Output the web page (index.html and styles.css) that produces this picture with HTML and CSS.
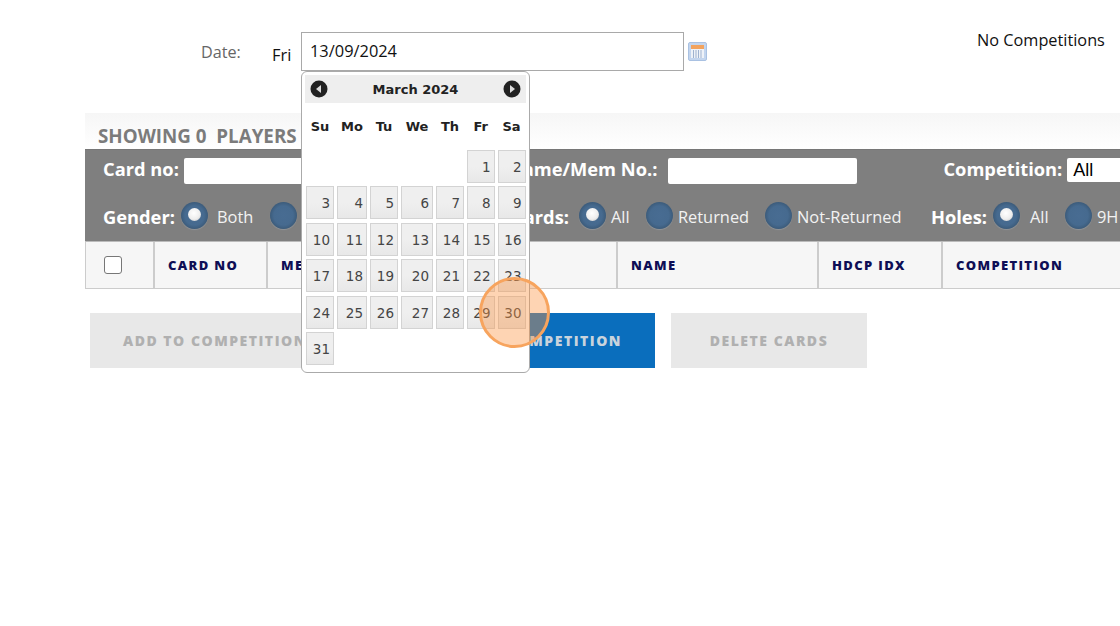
FILE: index.html
```html
<!DOCTYPE html>
<html lang="en">
<head>
<meta charset="utf-8">
<title>Cards</title>
<link rel="stylesheet" href="styles.css">
</head>
<body>
<div class="page">
  <div class="top">
    <span class="date-label">Date:</span>
    <span class="day">Fri</span>
    <input class="date-input" type="text" value="13/09/2024">
    <svg class="cal-icon" width="19" height="19" viewBox="0 0 19 19">
      <rect x=".5" y=".5" width="18" height="18" rx="1.5" fill="#c3d5ee" stroke="#a9c1e2"/>
      <rect x="3" y="3" width="13" height="4" fill="#f2a35e"/>
      <rect x="3" y="7" width="13" height="9" fill="#eef2f8"/>
      <path d="M5.5 8v8M8 8v8M10.5 8v8M13 8v8" stroke="#9fb2cf" stroke-width="1"/>
    </svg>
    <span class="no-comp">No Competitions</span>
  </div>

  <section class="panel">
    <h2 class="showing">SHOWING 0&nbsp; PLAYERS</h2>
    <div class="filters">
      <div class="filter-row row-one">
        <label class="f-label">Card no:</label>
        <input class="f-input card-input" type="text">
        <label class="f-label name-label">Name/Mem No.:</label>
        <input class="f-input name-input" type="text">
        <label class="f-label comp-label">Competition:</label>
        <span class="select">All</span>
      </div>
      <div class="filter-row row-two">
        <label class="f-label">Gender:</label>
        <span class="radio on r-gender"></span><span class="r-text t-both">Both</span>
        <span class="radio r-male"></span><span class="r-text t-male">Male</span>
        <label class="f-label cards-label">Cards:</label>
        <span class="radio on r-cards"></span><span class="r-text t-all">All</span>
        <span class="radio r-ret"></span><span class="r-text t-ret">Returned</span>
        <span class="radio r-not"></span><span class="r-text t-not">Not-Returned</span>
        <label class="f-label holes-label">Holes:</label>
        <span class="radio on r-holes"></span><span class="r-text t-hall">All</span>
        <span class="radio r-nine"></span><span class="r-text t-nine">9H</span>
      </div>
    </div>
    <div class="thead">
      <div class="th th-check"><span class="check"></span></div>
      <div class="th th-card">CARD NO</div>
      <div class="th th-mem">MEMBER NO</div>
      <div class="th th-name">NAME</div>
      <div class="th th-hdcp">HDCP IDX</div>
      <div class="th th-comp">COMPETITION</div>
    </div>
    <div class="actions">
      <button class="btn btn-add">ADD TO COMPETITION</button>
      <button class="btn btn-remove">REMOVE COMPETITION</button>
      <button class="btn btn-delete">DELETE CARDS</button>
    </div>
  </section>
</div>

<div class="picker">
  <div class="picker-head">
    <svg width="18" height="18" viewBox="0 0 18 18"><circle cx="9" cy="9" r="8.5" fill="#222"/><path d="M11 5v8L6 9z" fill="#ddd"/></svg>
    <span class="month">March 2024</span>
    <svg width="18" height="18" viewBox="0 0 18 18"><circle cx="9" cy="9" r="8.5" fill="#222"/><path d="M7 5v8l5-4z" fill="#ddd"/></svg>
  </div>
  <div class="cal">
    <b>Su</b><b>Mo</b><b>Tu</b><b>We</b><b>Th</b><b>Fr</b><b>Sa</b>
    <i class="blank-5"></i><a>1</a><a>2</a>
    <a>3</a><a>4</a><a>5</a><a>6</a><a>7</a><a>8</a><a>9</a>
    <a>10</a><a>11</a><a>12</a><a>13</a><a>14</a><a>15</a><a>16</a>
    <a>17</a><a>18</a><a>19</a><a>20</a><a>21</a><a>22</a><a>23</a>
    <a>24</a><a>25</a><a>26</a><a>27</a><a>28</a><a>29</a><a>30</a>
    <a>31</a>
  </div>
</div>
<div class="click-mark"></div>
</body>
</html>
```
FILE: styles.css
```css
html, body { margin: 0; padding: 0; width: 1120px; height: 626px; overflow: hidden; background: #fff; }
body { font-family: "Open Sans", sans-serif; color: #000; position: relative; }
* { box-sizing: border-box; }

.page { padding-top: 32px; width: 1120px; overflow: hidden; }

.top { display: flex; align-items: flex-start; height: 81px; }
.date-label { margin-left: 201px; width: 71px; font-size: 16.2px; line-height: 40px; color: #666; }
.day { width: 29px; font-size: 16.4px; line-height: 46px; color: #111; }
.date-input { width: 383px; height: 39px; border: 1px solid #a9a9a9; padding: 0 8px 2px; font: 16.4px "Open Sans", sans-serif; color: #111; outline: none; }
.cal-icon { flex: none; margin: 10px 0 0 4px; }
.no-comp { margin-left: 270px; font-size: 16.3px; line-height: 16px; color: #111; white-space: nowrap; }

.panel { margin-left: 85px; width: 1100px; }
.showing { margin: 0; height: 36px; padding: 12px 0 0 13px; font-size: 18.8px; line-height: 22px; font-weight: 700; color: #7b7b7b; background: linear-gradient(#f6f6f6, #fff); white-space: nowrap; }

.filters { height: 92px; background: #7f7f7f; color: #fff; border-top: 1px solid #777; }
.filter-row { display: flex; align-items: center; white-space: nowrap; padding-left: 18px; }
.row-one { height: 41px; padding-top: 1px; }
.row-two { height: 49px; }
.f-label { flex: none; font-size: 18.3px; font-weight: 700; line-height: 24px; }
.row-one .f-label { margin-bottom: 5px; }
.row-two .f-label { margin-top: 3px; }
.f-input { flex: none; height: 26px; border: 0; border-radius: 2px; background: #fff; }
.card-input { width: 220px; margin-left: 5px; }
.row-one .name-label { margin-left: 104px; }
.name-input { width: 189px; margin-left: 11px; }
.row-one .comp-label { margin-left: 86px; }
.select { display: block; flex: none; width: 120px; height: 24px; margin: 0 0 2px 5px; background: #fff; color: #000; font: 18px/24px "Liberation Sans", sans-serif; padding-left: 6px; border-radius: 2px; }

.radio { flex: none; width: 27px; height: 27px; border-radius: 50%; background: radial-gradient(circle, #486c92 0, #466a8f 50%, #36536f 82%, #2f4a64 100%); box-shadow: 0 1px 1px rgba(160, 170, 180, .5); position: relative; }
.radio.on::after { content: ""; position: absolute; left: 7px; top: 6px; width: 13px; height: 13px; border-radius: 50%; background: radial-gradient(circle at 45% 40%, #fff 0, #eee 55%, #bbb 100%); }
.r-text { flex: none; font-size: 16.4px; line-height: 24px; color: #f2f2f2; margin-top: 3px; }
.r-gender { margin-left: 6px; }
.t-both { margin-left: 9px; width: 53px; }
.t-male { margin-left: 6px; width: 60px; }
.row-two .cards-label { display: block; width: 206px; text-align: right; }
.r-cards { margin-left: 10px; }
.t-all { margin-left: 5px; width: 35px; }
.t-ret { margin-left: 5px; width: 87px; }
.t-not { margin-left: 5px; width: 134px; }
.r-holes { margin-left: 6px; }
.t-hall { margin-left: 10px; width: 35px; }
.t-nine { margin-left: 5px; }

.thead { display: flex; height: 48px; border: 1px solid #ccc; border-top: 1px solid #bbb; background: #f6f6f6; }
.th { display: flex; align-items: center; border-right: 2px solid #ccc; padding-left: 13px; font-size: 13px; font-weight: 800; letter-spacing: 1.35px; color: #0e0e55; white-space: nowrap; }
.th-check { width: 69px; padding-left: 18px; }
.th-card { width: 113px; }
.th-mem { width: 350px; }
.th-name { width: 201px; }
.th-hdcp { width: 124px; }
.th-comp { flex: 1; border-right: 0; }
.check { display: block; width: 18px; height: 18px; border: 1px solid #777; border-radius: 3px; background: #fff; }

.actions { display: flex; gap: 16px; padding: 24px 0 0 5px; }
.btn { height: 55px; border: 0; padding: 0 33px; font: 800 14px "Open Sans", sans-serif; letter-spacing: 1.5px; white-space: nowrap; }
.btn-add { width: 261px; background: #e8e8e8; color: #b0b0b0; text-align: left; }
.btn-remove { width: 288px; background: #0a6ebd; color: #c9d3dc; text-align: right; }
.btn-delete { width: 196px; padding: 0; background: #e8e8e8; color: #b0b0b0; }

.picker { position: absolute; left: 301px; top: 71px; width: 229px; height: 302px; border: 1px solid #aaa; border-radius: 6px; background: #fff; padding: 3px; }
.picker-head { display: flex; align-items: center; justify-content: space-between; height: 28px; padding: 0 5px; background: #eee; }
.month { font: 700 13px "DejaVu Sans", sans-serif; color: #222; }
.cal { display: grid; grid-template-columns: 28px 30px 28px 32px 28px 27.5px 28px; column-gap: 3px; row-gap: 3.5px; grid-template-rows: 43px repeat(6, 33px); margin-left: 1px; }
.cal b { font: 700 13px/47px "DejaVu Sans", sans-serif; color: #222; text-align: center; align-self: start; }
.cal .blank-5 { grid-column: span 5; }
.cal a { display: block; border: 1px solid #d3d3d3; background: linear-gradient(#efefef 50%, #e8e8e8); font: 13.5px/33px "DejaVu Sans", sans-serif; color: #454545; text-align: right; padding-right: 3px; }

.click-mark { position: absolute; left: 479px; top: 277px; width: 71px; height: 71px; border-radius: 50%; border: 3px solid #f7a45e; background: rgba(252, 147, 66, .4); }
```
